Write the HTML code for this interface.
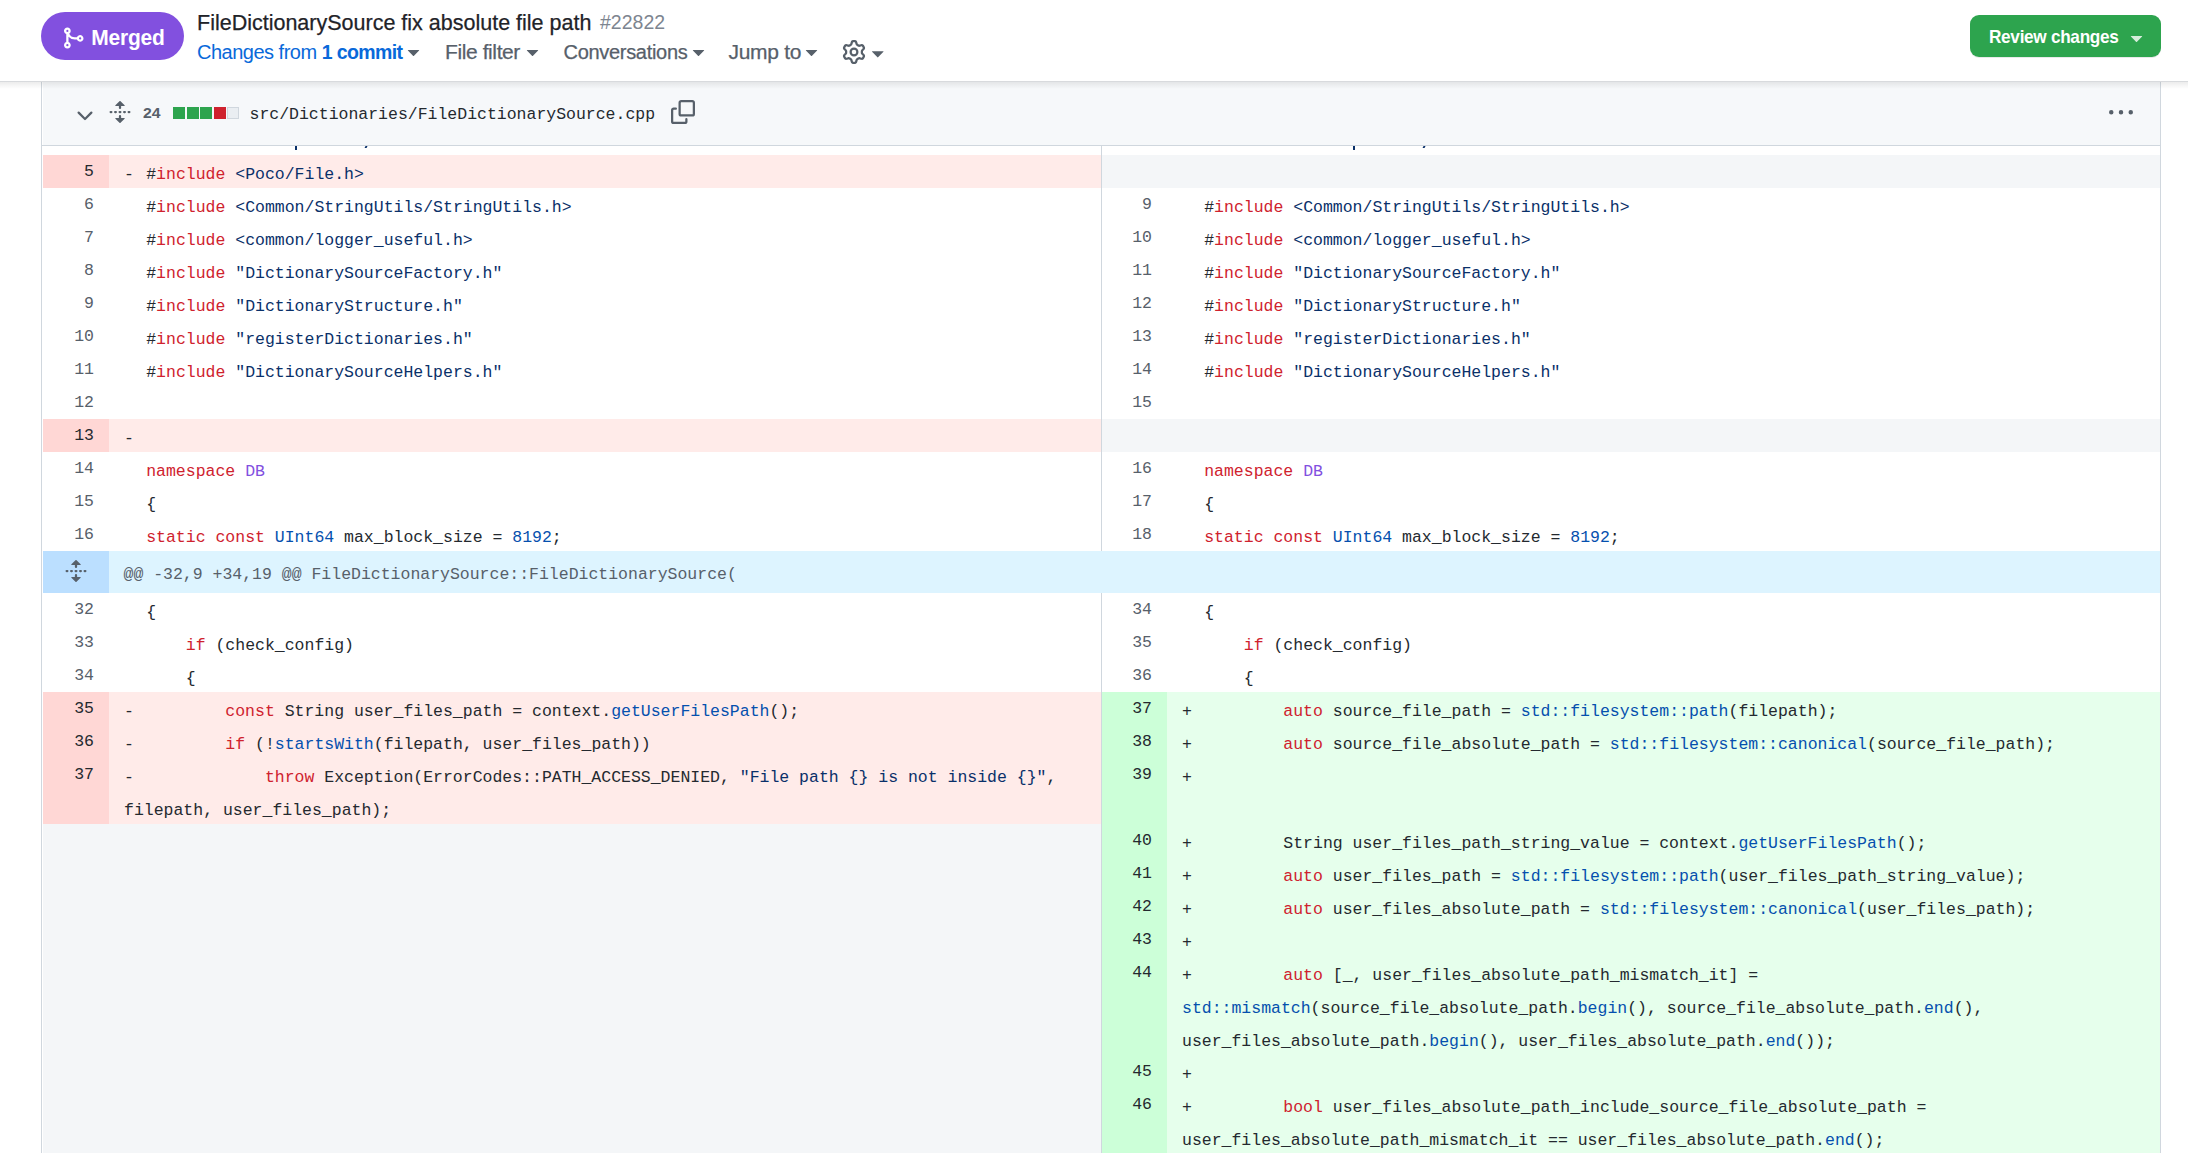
<!DOCTYPE html>
<html><head><meta charset="utf-8">
<style>
html,body{margin:0;padding:0;background:#fff;width:2188px;height:1153px;overflow:hidden;position:relative}
*{box-sizing:border-box}
.a{position:absolute}
.t{position:absolute;font-family:"Liberation Sans",sans-serif;white-space:nowrap;line-height:1}
#hdr{position:absolute;left:0;top:0;width:2188px;height:81px;background:#fff;z-index:5}
#hdrline{position:absolute;left:0;top:81px;width:2188px;height:1px;background:#d8dadd;z-index:5}
#hdrshadow{position:absolute;left:0;top:82px;width:2188px;height:7px;background:linear-gradient(rgba(0,0,0,0.075),rgba(0,0,0,0));z-index:5}
#box{position:absolute;left:41px;top:40px;width:2120px;height:1200px;border:1px solid #d0d7de;border-radius:9px;background:#fff}
#fh{position:absolute;left:43px;top:60px;width:2117px;height:85px;background:#f6f8fa}
#fhb{position:absolute;left:42px;top:145px;width:2118px;height:1px;background:#d0d7de}
#mid{position:absolute;left:1101px;top:146px;width:1px;height:405px;background:#d0d7de}
#mid2{position:absolute;left:1101px;top:593px;width:1px;height:600px;background:#d0d7de}
.num{position:absolute;font-family:"Liberation Mono",monospace;font-size:16.49px;line-height:33px;text-align:right;color:#57606a;padding-right:15px}
.code{position:absolute;font-family:"Liberation Mono",monospace;font-size:16.49px;line-height:33px;color:#24292f;white-space:pre;padding-top:3px}
.mk{padding-right:2.4px}
.k{color:#cf222e}.c1{color:#0550ae}.s{color:#0a3069}.en{color:#8250df}
.dn{background:#ffd7d5;color:#24292f}
.dl{background:#ffebe9}
.an{background:#ccffd8;color:#24292f}
.al{background:#e6ffec}
.em{background:#f4f6f8}
.hn{background:#bbdfff}
.hl{background:#ddf4ff}
svg{position:absolute;overflow:visible}
</style></head><body>
<div id="box"></div>
<div id="fh"></div>
<div id="fhb"></div>

<!-- file header -->
<svg style="left:73px;top:103.5px" width="24" height="24" viewBox="0 0 16 16" fill="#57606a"><path d="M12.78 5.22a.749.749 0 0 1 0 1.06l-4.25 4.25a.749.749 0 0 1-1.06 0L3.22 6.28a.749.749 0 1 1 1.06-1.06L8 8.939l3.72-3.719a.749.749 0 0 1 1.06 0Z"/></svg>
<svg style="left:108px;top:100px" width="24" height="24" viewBox="0 0 16 16" fill="#57606a"><path d="m8.177.677 2.896 2.896a.25.25 0 0 1-.177.427H8.75v1.25a.75.75 0 0 1-1.5 0V4H5.104a.25.25 0 0 1-.177-.427L7.823.677a.25.25 0 0 1 .354 0ZM7.25 10.75a.75.75 0 0 1 1.5 0V12h2.146a.25.25 0 0 1 .177.427l-2.896 2.896a.25.25 0 0 1-.354 0l-2.896-2.896A.25.25 0 0 1 5.104 12H7.25v-1.25Zm-5-2a.75.75 0 0 0 0-1.5h-.5a.75.75 0 0 0 0 1.5h.5ZM6 8a.75.75 0 0 1-.75.75h-.5a.75.75 0 0 1 0-1.5h.5A.75.75 0 0 1 6 8Zm2.25.75a.75.75 0 0 0 0-1.5h-.5a.75.75 0 0 0 0 1.5h.5ZM12 8a.75.75 0 0 1-.75.75h-.5a.75.75 0 0 1 0-1.5h.5A.75.75 0 0 1 12 8Zm2.25.75a.75.75 0 0 0 0-1.5h-.5a.75.75 0 0 0 0 1.5h.5Z"/></svg>
<div class="t" style="left:142.5px;top:105.4px;font-size:15.2px;font-weight:bold;color:#57606a;transform:scaleX(1.04);transform-origin:0 0">24</div>
<div class="a" style="left:173px;top:107px;width:12px;height:12px;background:#2da44e"></div>
<div class="a" style="left:187px;top:107px;width:12px;height:12px;background:#2da44e"></div>
<div class="a" style="left:200px;top:107px;width:12px;height:12px;background:#2da44e"></div>
<div class="a" style="left:214px;top:107px;width:12px;height:12px;background:#cf222e"></div>
<div class="a" style="left:227px;top:107px;width:12px;height:12px;background:#eaeef2;border:1px solid #d0d7de"></div>
<div class="a" style="left:249.5px;top:103px;font-family:'Liberation Mono',monospace;font-size:16.49px;line-height:24px;color:#24292f;white-space:pre">src/Dictionaries/FileDictionarySource.cpp</div>
<svg style="left:671px;top:100px" width="24" height="24" viewBox="0 0 16 16" fill="#57606a"><path d="M0 6.75C0 5.784.784 5 1.75 5h1.5a.75.75 0 0 1 0 1.5h-1.5a.25.25 0 0 0-.25.25v7.5c0 .138.112.25.25.25h7.5a.25.25 0 0 0 .25-.25v-1.5a.75.75 0 0 1 1.5 0v1.5A1.75 1.75 0 0 1 9.25 16h-7.5A1.75 1.75 0 0 1 0 14.25Z"/><path d="M5 1.75C5 .784 5.784 0 6.75 0h7.5C15.216 0 16 .784 16 1.75v7.5A1.75 1.75 0 0 1 14.25 11h-7.5A1.75 1.75 0 0 1 5 9.25Zm1.75-.25a.25.25 0 0 0-.25.25v7.5c0 .138.112.25.25.25h7.5a.25.25 0 0 0 .25-.25v-7.5a.25.25 0 0 0-.25-.25Z"/></svg>
<svg style="left:2109px;top:101px" width="24" height="24" viewBox="0 0 16 16" fill="#57606a"><path d="M8 9a1.5 1.5 0 1 0 0-3 1.5 1.5 0 0 0 0 3ZM1.5 9a1.5 1.5 0 1 0 0-3 1.5 1.5 0 0 0 0 3Zm13 0a1.5 1.5 0 1 0 0-3 1.5 1.5 0 0 0 0 3Z"/></svg>

<!-- scrolled-under line fragments -->
<div class="a" style="left:295px;top:146px;width:2px;height:4px;background:#0a3069"></div>
<div class="a" style="left:364.5px;top:146px;width:1.6px;height:2.2px;background:#0a3069;transform:skewX(-25deg)"></div>
<div class="a" style="left:1353px;top:146px;width:2px;height:4px;background:#0a3069"></div>
<div class="a" style="left:1422.5px;top:146px;width:1.6px;height:2.2px;background:#0a3069;transform:skewX(-25deg)"></div>

<div class="a dl" style="left:109px;top:155px;width:992px;height:33px"></div>
<div class="num dn" style="left:43px;top:155px;width:66px;height:33px">5</div>
<div class="code" style="left:124.00px;top:155px"><span class="mk">- </span>#<span class="k">include</span> <span class="s">&lt;Poco/File.h&gt;</span></div>
<div class="a em" style="left:1102px;top:155px;width:1058px;height:33px"></div>
<div class="num " style="left:43px;top:188px;width:66px;height:33px">6</div>
<div class="code" style="left:124.00px;top:188px"><span class="mk">  </span>#<span class="k">include</span> <span class="s">&lt;Common/StringUtils/StringUtils.h&gt;</span></div>
<div class="num " style="left:1102px;top:188px;width:65px;height:33px">9</div>
<div class="code" style="left:1182.00px;top:188px"><span class="mk">  </span>#<span class="k">include</span> <span class="s">&lt;Common/StringUtils/StringUtils.h&gt;</span></div>
<div class="num " style="left:43px;top:221px;width:66px;height:33px">7</div>
<div class="code" style="left:124.00px;top:221px"><span class="mk">  </span>#<span class="k">include</span> <span class="s">&lt;common/logger_useful.h&gt;</span></div>
<div class="num " style="left:1102px;top:221px;width:65px;height:33px">10</div>
<div class="code" style="left:1182.00px;top:221px"><span class="mk">  </span>#<span class="k">include</span> <span class="s">&lt;common/logger_useful.h&gt;</span></div>
<div class="num " style="left:43px;top:254px;width:66px;height:33px">8</div>
<div class="code" style="left:124.00px;top:254px"><span class="mk">  </span>#<span class="k">include</span> <span class="s">"DictionarySourceFactory.h"</span></div>
<div class="num " style="left:1102px;top:254px;width:65px;height:33px">11</div>
<div class="code" style="left:1182.00px;top:254px"><span class="mk">  </span>#<span class="k">include</span> <span class="s">"DictionarySourceFactory.h"</span></div>
<div class="num " style="left:43px;top:287px;width:66px;height:33px">9</div>
<div class="code" style="left:124.00px;top:287px"><span class="mk">  </span>#<span class="k">include</span> <span class="s">"DictionaryStructure.h"</span></div>
<div class="num " style="left:1102px;top:287px;width:65px;height:33px">12</div>
<div class="code" style="left:1182.00px;top:287px"><span class="mk">  </span>#<span class="k">include</span> <span class="s">"DictionaryStructure.h"</span></div>
<div class="num " style="left:43px;top:320px;width:66px;height:33px">10</div>
<div class="code" style="left:124.00px;top:320px"><span class="mk">  </span>#<span class="k">include</span> <span class="s">"registerDictionaries.h"</span></div>
<div class="num " style="left:1102px;top:320px;width:65px;height:33px">13</div>
<div class="code" style="left:1182.00px;top:320px"><span class="mk">  </span>#<span class="k">include</span> <span class="s">"registerDictionaries.h"</span></div>
<div class="num " style="left:43px;top:353px;width:66px;height:33px">11</div>
<div class="code" style="left:124.00px;top:353px"><span class="mk">  </span>#<span class="k">include</span> <span class="s">"DictionarySourceHelpers.h"</span></div>
<div class="num " style="left:1102px;top:353px;width:65px;height:33px">14</div>
<div class="code" style="left:1182.00px;top:353px"><span class="mk">  </span>#<span class="k">include</span> <span class="s">"DictionarySourceHelpers.h"</span></div>
<div class="num " style="left:43px;top:386px;width:66px;height:33px">12</div>
<div class="code" style="left:124.00px;top:386px"><span class="mk"></span></div>
<div class="num " style="left:1102px;top:386px;width:65px;height:33px">15</div>
<div class="code" style="left:1182.00px;top:386px"><span class="mk"></span></div>
<div class="a dl" style="left:109px;top:419px;width:992px;height:33px"></div>
<div class="num dn" style="left:43px;top:419px;width:66px;height:33px">13</div>
<div class="code" style="left:124.00px;top:419px"><span class="mk">-</span></div>
<div class="a em" style="left:1102px;top:419px;width:1058px;height:33px"></div>
<div class="num " style="left:43px;top:452px;width:66px;height:33px">14</div>
<div class="code" style="left:124.00px;top:452px"><span class="mk">  </span><span class="k">namespace</span> <span class="en">DB</span></div>
<div class="num " style="left:1102px;top:452px;width:65px;height:33px">16</div>
<div class="code" style="left:1182.00px;top:452px"><span class="mk">  </span><span class="k">namespace</span> <span class="en">DB</span></div>
<div class="num " style="left:43px;top:485px;width:66px;height:33px">15</div>
<div class="code" style="left:124.00px;top:485px"><span class="mk">  </span>{</div>
<div class="num " style="left:1102px;top:485px;width:65px;height:33px">17</div>
<div class="code" style="left:1182.00px;top:485px"><span class="mk">  </span>{</div>
<div class="num " style="left:43px;top:518px;width:66px;height:33px">16</div>
<div class="code" style="left:124.00px;top:518px"><span class="mk">  </span><span class="k">static</span> <span class="k">const</span> <span class="c1">UInt64</span> max_block_size = <span class="c1">8192</span>;</div>
<div class="num " style="left:1102px;top:518px;width:65px;height:33px">18</div>
<div class="code" style="left:1182.00px;top:518px"><span class="mk">  </span><span class="k">static</span> <span class="k">const</span> <span class="c1">UInt64</span> max_block_size = <span class="c1">8192</span>;</div>
<div class="num " style="left:43px;top:593px;width:66px;height:33px">32</div>
<div class="code" style="left:124.00px;top:593px"><span class="mk">  </span>{</div>
<div class="num " style="left:1102px;top:593px;width:65px;height:33px">34</div>
<div class="code" style="left:1182.00px;top:593px"><span class="mk">  </span>{</div>
<div class="num " style="left:43px;top:626px;width:66px;height:33px">33</div>
<div class="code" style="left:124.00px;top:626px"><span class="mk">  </span>    <span class="k">if</span> (check_config)</div>
<div class="num " style="left:1102px;top:626px;width:65px;height:33px">35</div>
<div class="code" style="left:1182.00px;top:626px"><span class="mk">  </span>    <span class="k">if</span> (check_config)</div>
<div class="num " style="left:43px;top:659px;width:66px;height:33px">34</div>
<div class="code" style="left:124.00px;top:659px"><span class="mk">  </span>    {</div>
<div class="num " style="left:1102px;top:659px;width:65px;height:33px">36</div>
<div class="code" style="left:1182.00px;top:659px"><span class="mk">  </span>    {</div>
<div class="a dl" style="left:109px;top:692px;width:992px;height:33px"></div>
<div class="num dn" style="left:43px;top:692px;width:66px;height:33px">35</div>
<div class="code" style="left:124.00px;top:692px"><span class="mk">- </span>        <span class="k">const</span> String user_files_path = context.<span class="c1">getUserFilesPath</span>();</div>
<div class="a al" style="left:1167px;top:692px;width:993px;height:33px"></div>
<div class="num an" style="left:1102px;top:692px;width:65px;height:33px">37</div>
<div class="code" style="left:1182.00px;top:692px"><span class="mk">+ </span>        <span class="k">auto</span> source_file_path = <span class="c1">std::filesystem::path</span>(filepath);</div>
<div class="a dl" style="left:109px;top:725px;width:992px;height:33px"></div>
<div class="num dn" style="left:43px;top:725px;width:66px;height:33px">36</div>
<div class="code" style="left:124.00px;top:725px"><span class="mk">- </span>        <span class="k">if</span> (!<span class="c1">startsWith</span>(filepath, user_files_path))</div>
<div class="a al" style="left:1167px;top:725px;width:993px;height:33px"></div>
<div class="num an" style="left:1102px;top:725px;width:65px;height:33px">38</div>
<div class="code" style="left:1182.00px;top:725px"><span class="mk">+ </span>        <span class="k">auto</span> source_file_absolute_path = <span class="c1">std::filesystem::canonical</span>(source_file_path);</div>
<div class="a dl" style="left:109px;top:758px;width:992px;height:66px"></div>
<div class="num dn" style="left:43px;top:758px;width:66px;height:66px">37</div>
<div class="code" style="left:124.00px;top:758px"><span class="mk">- </span>            <span class="k">throw</span> Exception(ErrorCodes::PATH_ACCESS_DENIED, <span class="s">"File path {} is not inside {}"</span>,<br>filepath, user_files_path);</div>
<div class="a al" style="left:1167px;top:758px;width:993px;height:66px"></div>
<div class="num an" style="left:1102px;top:758px;width:65px;height:66px">39</div>
<div class="code" style="left:1182.00px;top:758px"><span class="mk">+</span></div>
<div class="a em" style="left:43px;top:824px;width:1058px;height:33px"></div>
<div class="a al" style="left:1167px;top:824px;width:993px;height:33px"></div>
<div class="num an" style="left:1102px;top:824px;width:65px;height:33px">40</div>
<div class="code" style="left:1182.00px;top:824px"><span class="mk">+ </span>        String user_files_path_string_value = context.<span class="c1">getUserFilesPath</span>();</div>
<div class="a em" style="left:43px;top:857px;width:1058px;height:33px"></div>
<div class="a al" style="left:1167px;top:857px;width:993px;height:33px"></div>
<div class="num an" style="left:1102px;top:857px;width:65px;height:33px">41</div>
<div class="code" style="left:1182.00px;top:857px"><span class="mk">+ </span>        <span class="k">auto</span> user_files_path = <span class="c1">std::filesystem::path</span>(user_files_path_string_value);</div>
<div class="a em" style="left:43px;top:890px;width:1058px;height:33px"></div>
<div class="a al" style="left:1167px;top:890px;width:993px;height:33px"></div>
<div class="num an" style="left:1102px;top:890px;width:65px;height:33px">42</div>
<div class="code" style="left:1182.00px;top:890px"><span class="mk">+ </span>        <span class="k">auto</span> user_files_absolute_path = <span class="c1">std::filesystem::canonical</span>(user_files_path);</div>
<div class="a em" style="left:43px;top:923px;width:1058px;height:33px"></div>
<div class="a al" style="left:1167px;top:923px;width:993px;height:33px"></div>
<div class="num an" style="left:1102px;top:923px;width:65px;height:33px">43</div>
<div class="code" style="left:1182.00px;top:923px"><span class="mk">+</span></div>
<div class="a em" style="left:43px;top:956px;width:1058px;height:99px"></div>
<div class="a al" style="left:1167px;top:956px;width:993px;height:99px"></div>
<div class="num an" style="left:1102px;top:956px;width:65px;height:99px">44</div>
<div class="code" style="left:1182.00px;top:956px"><span class="mk">+ </span>        <span class="k">auto</span> [_, user_files_absolute_path_mismatch_it] =<br><span class="c1">std::mismatch</span>(source_file_absolute_path.<span class="c1">begin</span>(), source_file_absolute_path.<span class="c1">end</span>(),<br>user_files_absolute_path.<span class="c1">begin</span>(), user_files_absolute_path.<span class="c1">end</span>());</div>
<div class="a em" style="left:43px;top:1055px;width:1058px;height:33px"></div>
<div class="a al" style="left:1167px;top:1055px;width:993px;height:33px"></div>
<div class="num an" style="left:1102px;top:1055px;width:65px;height:33px">45</div>
<div class="code" style="left:1182.00px;top:1055px"><span class="mk">+</span></div>
<div class="a em" style="left:43px;top:1088px;width:1058px;height:66px"></div>
<div class="a al" style="left:1167px;top:1088px;width:993px;height:66px"></div>
<div class="num an" style="left:1102px;top:1088px;width:65px;height:66px">46</div>
<div class="code" style="left:1182.00px;top:1088px"><span class="mk">+ </span>        <span class="k">bool</span> user_files_absolute_path_include_source_file_absolute_path =<br>user_files_absolute_path_mismatch_it == user_files_absolute_path.<span class="c1">end</span>();</div>

<!-- hunk -->
<div class="a hn" style="left:43px;top:551px;width:66px;height:42px"></div>
<div class="a hl" style="left:109px;top:551px;width:2051px;height:42px"></div>
<svg style="left:64px;top:559px" width="24" height="24" viewBox="0 0 16 16" fill="#57606a"><path d="m8.177.677 2.896 2.896a.25.25 0 0 1-.177.427H8.75v1.25a.75.75 0 0 1-1.5 0V4H5.104a.25.25 0 0 1-.177-.427L7.823.677a.25.25 0 0 1 .354 0ZM7.25 10.75a.75.75 0 0 1 1.5 0V12h2.146a.25.25 0 0 1 .177.427l-2.896 2.896a.25.25 0 0 1-.354 0l-2.896-2.896A.25.25 0 0 1 5.104 12H7.25v-1.25Zm-5-2a.75.75 0 0 0 0-1.5h-.5a.75.75 0 0 0 0 1.5h.5ZM6 8a.75.75 0 0 1-.75.75h-.5a.75.75 0 0 1 0-1.5h.5A.75.75 0 0 1 6 8Zm2.25.75a.75.75 0 0 0 0-1.5h-.5a.75.75 0 0 0 0 1.5h.5ZM12 8a.75.75 0 0 1-.75.75h-.5a.75.75 0 0 1 0-1.5h.5A.75.75 0 0 1 12 8Zm2.25.75a.75.75 0 0 0 0-1.5h-.5a.75.75 0 0 0 0 1.5h.5Z"/></svg>
<div class="code" style="left:123.5px;top:551px;line-height:42px;padding-top:2.5px;color:#57606a">@@ -32,9 +34,19 @@ FileDictionarySource::FileDictionarySource(</div>
<div id="mid"></div>
<div id="mid2"></div>

<div id="hdr">
  <div class="a" style="left:41px;top:12px;width:143px;height:48px;border-radius:24px;background:#8250df"></div>
  <svg style="left:61px;top:26px" width="24" height="24" viewBox="0 0 16 16" fill="#fff"><path d="M5.45 5.154A4.25 4.25 0 0 0 9.25 7.5h1.378a2.251 2.251 0 1 1 0 1.5H9.25A5.734 5.734 0 0 1 5 7.123v3.505a2.25 2.25 0 1 1-1.5 0V5.372a2.25 2.25 0 1 1 1.95-.218ZM4.25 13.5a.75.75 0 1 0 0-1.5.75.75 0 0 0 0 1.5Zm8.5-4.5a.75.75 0 1 0 0-1.5.75.75 0 0 0 0 1.5ZM5 3.25a.75.75 0 1 0 0 .001V3.25Z"/></svg>
  <div class="t" style="left:91.2px;top:27.2px;font-size:21px;font-weight:bold;letter-spacing:-0.2px;color:#fff;transform:scaleY(1.08);transform-origin:0 18px">Merged</div>
  <div class="t" style="left:197px;top:13px;font-size:21.5px;color:#1f2328;-webkit-text-stroke:0.25px #1f2328">FileDictionarySource fix absolute file path</div>
  <div class="t" style="left:600px;top:13px;font-size:19.5px;color:#7d8590">#22822</div>
  <div class="t" style="left:197px;top:42px;font-size:20px;letter-spacing:-0.5px;color:#0969da">Changes from <span style="font-weight:bold;letter-spacing:-0.6px;font-size:19.5px">1 commit</span></div>
  <svg style="left:401.4px;top:38.9px" width="25" height="25" viewBox="0 0 16 16" fill="#57606a"><path d="m4.427 7.427 3.396 3.396a.25.25 0 0 0 .354 0l3.396-3.396A.25.25 0 0 0 11.396 7H4.604a.25.25 0 0 0-.177.427Z"/></svg>
  <div class="t" style="left:445px;top:41.1px;font-size:21px;letter-spacing:-0.4px;color:#57606a;-webkit-text-stroke:0.25px #57606a">File filter</div>
  <svg style="left:520.2px;top:38.9px" width="25" height="25" viewBox="0 0 16 16" fill="#57606a"><path d="m4.427 7.427 3.396 3.396a.25.25 0 0 0 .354 0l3.396-3.396A.25.25 0 0 0 11.396 7H4.604a.25.25 0 0 0-.177.427Z"/></svg>
  <div class="t" style="left:563.5px;top:41.7px;font-size:20px;letter-spacing:-0.3px;color:#57606a;-webkit-text-stroke:0.25px #57606a">Conversations</div>
  <svg style="left:686.4px;top:38.9px" width="25" height="25" viewBox="0 0 16 16" fill="#57606a"><path d="m4.427 7.427 3.396 3.396a.25.25 0 0 0 .354 0l3.396-3.396A.25.25 0 0 0 11.396 7H4.604a.25.25 0 0 0-.177.427Z"/></svg>
  <div class="t" style="left:728.5px;top:40.8px;font-size:21px;letter-spacing:-0.3px;color:#57606a;-webkit-text-stroke:0.25px #57606a">Jump to</div>
  <svg style="left:799.2px;top:38.9px" width="25" height="25" viewBox="0 0 16 16" fill="#57606a"><path d="m4.427 7.427 3.396 3.396a.25.25 0 0 0 .354 0l3.396-3.396A.25.25 0 0 0 11.396 7H4.604a.25.25 0 0 0-.177.427Z"/></svg>
  <svg style="left:842px;top:40px" width="24" height="24" viewBox="0 0 16 16" fill="#57606a"><path d="M8 0a8.2 8.2 0 0 1 .701.031C9.444.095 9.99.645 10.16 1.29l.288 1.107c.018.066.079.158.212.224.231.114.454.243.668.386.123.082.233.09.299.071l1.103-.303c.644-.176 1.392.021 1.82.63.27.385.506.792.704 1.218.315.675.111 1.422-.364 1.891l-.814.806c-.049.048-.098.147-.088.294.016.257.016.515 0 .772-.01.147.038.246.088.294l.814.806c.475.469.679 1.216.364 1.891a7.977 7.977 0 0 1-.704 1.217c-.428.61-1.176.807-1.82.63l-1.102-.302c-.067-.019-.177-.011-.3.071a5.909 5.909 0 0 1-.668.386c-.133.066-.194.158-.211.224l-.29 1.106c-.168.646-.715 1.196-1.458 1.26a8.006 8.006 0 0 1-1.402 0c-.743-.064-1.289-.614-1.458-1.26l-.289-1.106c-.018-.066-.079-.158-.212-.224a5.738 5.738 0 0 1-.668-.386c-.123-.082-.233-.09-.299-.071l-1.103.303c-.644.176-1.392-.021-1.82-.63a8.12 8.12 0 0 1-.704-1.218c-.315-.675-.111-1.422.363-1.891l.815-.806c.05-.048.098-.147.088-.294a6.214 6.214 0 0 1 0-.772c.01-.147-.038-.246-.088-.294l-.815-.806C.635 6.045.431 5.298.746 4.623a7.92 7.92 0 0 1 .704-1.217c.428-.61 1.176-.807 1.82-.63l1.102.302c.067.019.177.011.3-.071.214-.143.437-.272.668-.386.133-.066.194-.158.211-.224l.29-1.106C6.009.645 6.556.095 7.299.03 7.53.01 7.764 0 8 0Zm-.571 1.525c-.036.003-.108.036-.137.146l-.289 1.105c-.147.561-.549.967-.998 1.189-.173.086-.34.183-.5.29-.417.278-.97.423-1.529.27l-1.103-.303c-.109-.03-.175.016-.195.045-.22.312-.412.644-.573.99-.014.031-.021.11.059.19l.815.806c.411.406.562.957.53 1.456a4.709 4.709 0 0 0 0 .582c.032.499-.119 1.05-.53 1.456l-.815.806c-.081.08-.073.159-.059.19.162.346.353.677.573.989.02.03.085.076.195.046l1.102-.303c.56-.153 1.113-.008 1.53.27.161.107.328.204.501.29.447.222.85.629.997 1.189l.289 1.105c.029.109.101.143.137.146a6.6 6.6 0 0 0 1.142 0c.036-.003.108-.036.137-.146l.289-1.105c.147-.561.549-.967.998-1.189.173-.086.34-.183.5-.29.417-.278.97-.423 1.529-.27l1.103.303c.109.029.175-.016.195-.045.22-.313.411-.644.573-.99.014-.031.021-.11-.059-.19l-.815-.806c-.411-.406-.562-.957-.53-1.456a4.709 4.709 0 0 0 0-.582c-.032-.499.119-1.05.53-1.456l.815-.806c.081-.08.073-.159.059-.19a6.464 6.464 0 0 0-.573-.989c-.02-.03-.085-.076-.195-.046l-1.102.303c-.56.153-1.113.008-1.53-.27a4.44 4.44 0 0 0-.501-.29c-.447-.222-.85-.629-.997-1.189l-.289-1.105c-.029-.11-.101-.143-.137-.146a6.6 6.6 0 0 0-1.142 0ZM11 8a3 3 0 1 1-6 0 3 3 0 0 1 6 0ZM9.5 8a1.5 1.5 0 1 0-3.001.001A1.5 1.5 0 0 0 9.5 8Z"/></svg>
  <svg style="left:864.8px;top:39.9px" width="25.5" height="25.5" viewBox="0 0 16 16" fill="#57606a"><path d="m4.427 7.427 3.396 3.396a.25.25 0 0 0 .354 0l3.396-3.396A.25.25 0 0 0 11.396 7H4.604a.25.25 0 0 0-.177.427Z"/></svg>
  <div class="a" style="left:1970px;top:15px;width:191px;height:42px;border-radius:9px;background:#2da44e;box-shadow:0 1px 0 rgba(31,35,40,0.1)"></div>
  <div class="t" style="left:1989px;top:28.5px;font-size:17.2px;font-weight:bold;letter-spacing:-0.3px;color:#fff;transform:scaleY(1.06);transform-origin:0 14.5px">Review changes</div>
  <svg style="left:2123.5px;top:25px" width="25" height="25" viewBox="0 0 16 16" fill="rgba(255,255,255,0.8)"><path d="m4.427 7.427 3.396 3.396a.25.25 0 0 0 .354 0l3.396-3.396A.25.25 0 0 0 11.396 7H4.604a.25.25 0 0 0-.177.427Z"/></svg>
</div>
<div id="hdrline"></div>
<div id="hdrshadow"></div>
</body></html>
